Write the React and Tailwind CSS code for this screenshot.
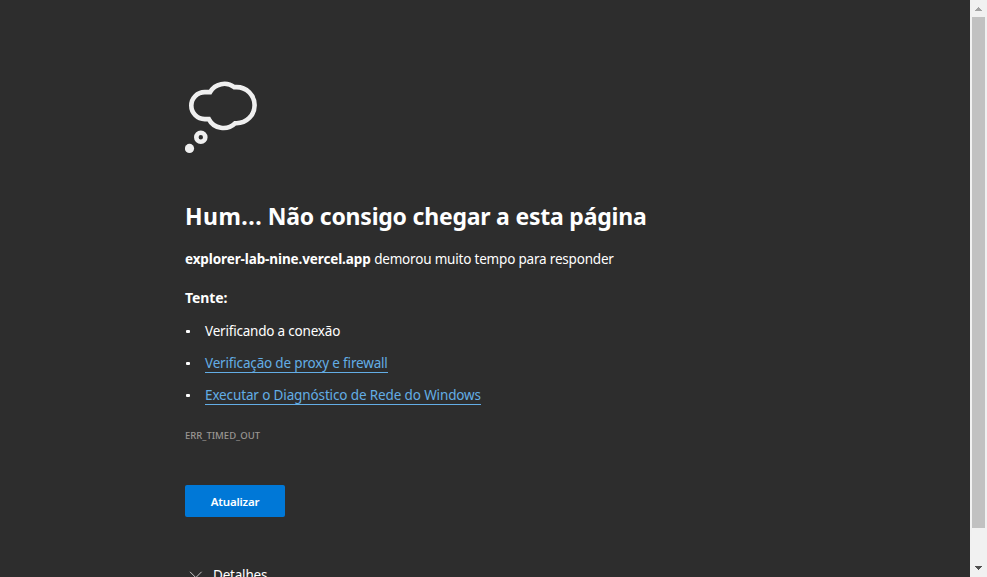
const sans = "font-['Noto_Sans','Open_Sans',sans-serif]";

function ThoughtCloud() {
  return (
    <svg className="block h-[72px] w-[72px] shrink-0" viewBox="0 0 72 72" fill="none" stroke="#efefef" strokeWidth="4.6">
      <path d="M25.300 11.300H20a13.500 13.500 0 0 0 0 27h4a16.500 16.500 0 0 0 26.200 4.200H51.700a18.100 18.100 0 0 0 0-36.200H49.500a16.500 16.500 0 0 0-24.200 5Z" transform="translate(-.2 -.2)" />
      <circle cx="15.8" cy="56.300" r="4.500" />
      <circle cx="4.500" cy="67.400" r="4.600" fill="#efefef" stroke="none" />
    </svg>
  );
}

function Item({ children }) {
  return (
    <li className="flex h-8 items-center">
      <span className="flex w-5 items-center">
        <span className="ml-px h-[3px] w-1 rounded-[1px] bg-white" />
      </span>
      {children}
    </li>
  );
}

export default function App() {
  return (
    <div className={`flex h-[577px] w-[987px] overflow-hidden bg-[#2d2d2d] text-white ${sans}`}>
      <main className="flex min-w-0 flex-1 flex-col items-start whitespace-nowrap pl-[185px] pt-[81px]">
        <ThoughtCloud />
        <h1 className="mt-[47px] h-8 shrink-0 text-[23px] font-bold leading-8 tracking-[-0.22px]">
          <span className="tracking-[0.45px]">Hum...</span> Não consigo chegar a esta página
        </h1>
        <p className="mt-[17px] h-5 shrink-0 text-[13.5px] leading-5">
          <b className="tracking-[-0.11px]">explorer-lab-nine.vercel.app</b>{" "}
          <span className="tracking-[-0.19px]">demorou muito tempo para responder</span>
        </p>
        <h2 className="mt-[19px] h-5 shrink-0 text-[14px] font-bold leading-5 tracking-[-0.1px]">Tente:</h2>
        <ul className="mt-[7px] shrink-0 text-[13.5px] leading-[18px] tracking-[-0.2px]">
          <Item><span>Verificando a conexão</span></Item>
          <Item><a className="mt-px border-b border-[#63ade5] tracking-[-0.17px] text-[#63ade5]">Verificação de proxy e firewall</a></Item>
          <Item><a className="mt-px border-b border-[#63ade5] tracking-[-0.13px] text-[#63ade5]">Executar o Diagnóstico de Rede do Windows</a></Item>
        </ul>
        <p className="mt-[17px] h-4 shrink-0 text-[9.5px] font-medium leading-4 text-[#9a9692]">ERR_TIMED_OUT</p>
        <button className="mt-[41px] h-8 w-[100px] shrink-0 rounded-[2px] bg-[#0078d7] pt-px text-[11.5px] font-semibold leading-8 tracking-[-0.2px]">Atualizar</button>
        <div className="mt-12 flex h-5 shrink-0 text-[13.5px] leading-5">
          <svg className="mr-[10px] mt-[6px] h-2 w-[18px]" viewBox="0 0 18 8" fill="none" stroke="#c8c8c8"><path d="M5 .8 10.800 6.600 16.600 .8" /></svg>
          <span className="tracking-[-0.2px]">Detalhes</span>
        </div>
      </main>
      <div className="flex w-[17px] shrink-0 flex-col items-center bg-[#f1f1f1]">
        <svg className="h-[17px] w-[17px] shrink-0" viewBox="0 0 17 17" fill="#a3a3a3" shapeRendering="crispEdges"><path d="M8 7h1v1h1v1h1v1h1v1H5v-1h1V9h1V8h1Z" /></svg>
        <div className="h-[511px] w-[13px] bg-[#c1c1c1]" />
        <svg className="mt-auto h-[17px] w-[17px] shrink-0" viewBox="0 0 17 17" fill="#505050" shapeRendering="crispEdges"><path d="M5 6h7v1h-1v1h-1v1H9v1H8V9H7V8H6V7H5Z" /></svg>
      </div>
    </div>
  );
}
